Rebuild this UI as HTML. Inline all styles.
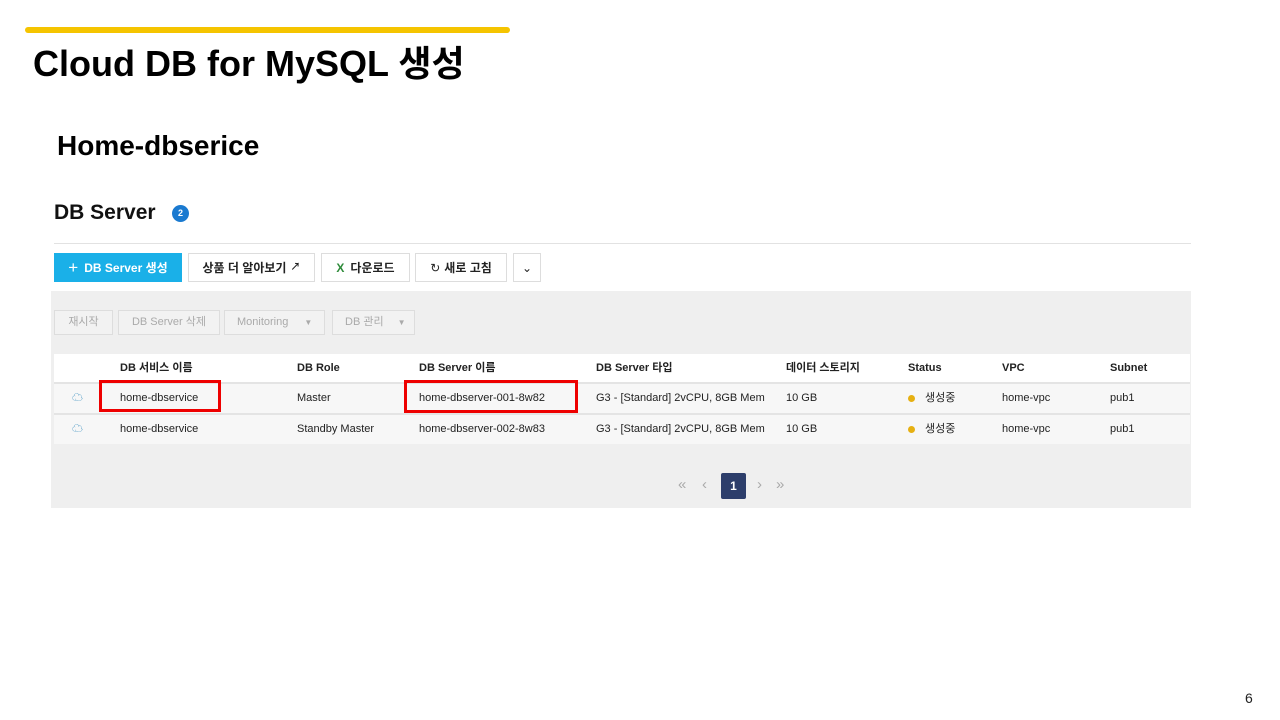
<!DOCTYPE html>
<html><head><meta charset="utf-8"><style>
*{margin:0;padding:0;box-sizing:border-box}
body{width:1280px;height:720px;background:#fff;position:relative;font-family:"Liberation Sans","Noto Sans CJK KR",sans-serif;overflow:hidden;color:#222}
.a{position:absolute}
.btn{position:absolute;top:253px;height:29px;border:1px solid #ddd;background:#fff;font-size:12px;font-weight:bold;display:flex;align-items:center;justify-content:center;color:#222;line-height:14px}
.dbtn{position:absolute;top:310px;height:25px;border:1px solid #ddd;background:#f2f2f2;font-size:11px;color:#aaa;display:flex;align-items:center;justify-content:center;line-height:13px}
.row{position:absolute;left:54px;width:1136px;font-size:11px}
.row span{position:absolute;top:0;height:100%;display:flex;align-items:center;line-height:13px}
.hd span{font-weight:bold}
.dot{display:inline-block;width:7px;height:7px;border-radius:50%;background:#e6b012;margin-right:10px}
.red{position:absolute;border:3px solid #e00;}
</style></head><body>
<div class="a" style="left:25px;top:27px;width:485px;height:6px;background:#f5c400;border-radius:3px"></div>
<div class="a" style="left:33px;top:44px;font-size:36px;line-height:40px;font-weight:bold;color:#000">Cloud DB for MySQL 생성</div>
<div class="a" style="left:57px;top:130px;font-size:28px;line-height:32px;font-weight:bold;color:#000">Home-dbserice</div>
<div class="a" style="left:54px;top:201px;font-size:21px;line-height:24px;font-weight:bold;color:#111">DB Server</div>
<div class="a" style="left:172px;top:205px;width:17px;height:17px;border-radius:50%;background:#1a7ad0;color:#fff;font-size:9px;font-weight:bold;text-align:center;line-height:17px">2</div>
<div class="a" style="left:54px;top:243px;width:1137px;height:1px;background:#e2e2e2"></div>
<div class="btn" style="left:54px;width:128px;background:#1ab0e8;border-color:#1ab0e8;color:#fff"><span style="font-size:17px;font-weight:normal;margin-right:6px">+</span>DB Server 생성</div>
<div class="btn" style="left:188px;width:127px">상품 더 알아보기 <span style="font-size:10px;margin-left:4px">↗</span></div>
<div class="btn" style="left:321px;width:89px"><span style="color:#2e8b3a;margin-right:6px">X</span>다운로드</div>
<div class="btn" style="left:415px;width:92px"><span style="margin-right:4px;font-weight:normal">↻</span>새로 고침</div>
<div class="btn" style="left:513px;width:28px;font-weight:normal">⌄</div>
<div class="a" style="left:51px;top:291px;width:1140px;height:217px;background:#efefef"></div>
<div class="dbtn" style="left:54px;width:59px">재시작</div>
<div class="dbtn" style="left:118px;width:102px">DB Server 삭제</div>
<div class="dbtn" style="left:224px;width:101px;justify-content:flex-start;padding-left:12px">Monitoring <span style="margin-left:16px;font-size:8px">▼</span></div>
<div class="dbtn" style="left:332px;width:83px;justify-content:flex-start;padding-left:12px">DB 관리 <span style="margin-left:14px;font-size:8px">▼</span></div>
<div class="row hd" style="top:354px;height:28px;background:#fff"><span style="left:66px">DB 서비스 이름</span><span style="left:243px">DB Role</span><span style="left:365px">DB Server 이름</span><span style="left:542px">DB Server 타입</span><span style="left:732px">데이터 스토리지</span><span style="left:854px">Status</span><span style="left:948px">VPC</span><span style="left:1056px">Subnet</span></div>
<div class="row" style="top:382px;height:31px;background:#f7f7f7;border-top:2px solid #e4e4e4"><span style="left:18px;color:#3a8fbf">☁</span><span style="left:66px">home-dbservice</span><span style="left:243px">Master</span><span style="left:365px">home-dbserver-001-8w82</span><span style="left:542px">G3 - [Standard] 2vCPU, 8GB Mem</span><span style="left:732px">10 GB</span><span style="left:854px"><i class="dot"></i>생성중</span><span style="left:948px">home-vpc</span><span style="left:1056px">pub1</span></div>
<div class="row" style="top:413px;height:31px;background:#f7f7f7;border-top:2px solid #e4e4e4"><span style="left:18px;color:#3a8fbf">☁</span><span style="left:66px">home-dbservice</span><span style="left:243px">Standby Master</span><span style="left:365px">home-dbserver-002-8w83</span><span style="left:542px">G3 - [Standard] 2vCPU, 8GB Mem</span><span style="left:732px">10 GB</span><span style="left:854px"><i class="dot"></i>생성중</span><span style="left:948px">home-vpc</span><span style="left:1056px">pub1</span></div>
<div class="red" style="left:99px;top:380px;width:122px;height:32px"></div>
<div class="red" style="left:404px;top:380px;width:174px;height:33px"></div>
<div class="a" style="left:678px;top:476px;font-size:15px;color:#aaa">«</div>
<div class="a" style="left:702px;top:476px;font-size:15px;color:#aaa">‹</div>
<div class="a" style="left:721px;top:473px;width:25px;height:26px;background:#2d3e6b;border-radius:2px;color:#fff;font-size:12px;font-weight:bold;text-align:center;line-height:26px">1</div>
<div class="a" style="left:757px;top:476px;font-size:15px;color:#aaa">›</div>
<div class="a" style="left:776px;top:476px;font-size:15px;color:#aaa">»</div>
<div class="a" style="left:1245px;top:690px;font-size:14px;color:#222">6</div>
</body></html>
